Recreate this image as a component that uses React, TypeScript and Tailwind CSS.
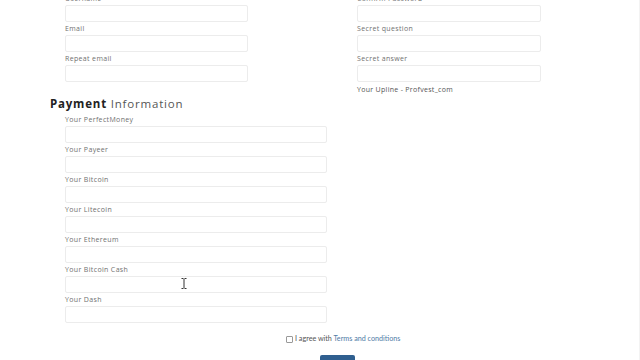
import React from "react";

const topLeft = ["Username", "Email", "Repeat email"];
const topRight = ["Confirm Password", "Secret question", "Secret answer"];
const payment = [
  "Your PerfectMoney",
  "Your Payeer",
  "Your Bitcoin",
  "Your Litecoin",
  "Your Ethereum",
  "Your Bitcoin Cash",
  "Your Dash",
];

const Field = ({ label, width }: { label: string; width: string }) => (
  <div className="flex flex-col">
    <label className="h-[13px] text-[7px] leading-[13px] tracking-[0.35px] text-[#707070]">
      {label}
    </label>
    <div className={`${width} h-[17px] rounded-[2px] border border-[#ececec] bg-white`} />
  </div>
);

const App = () => {
  return (
    <div
      className="relative h-[360px] w-[640px] overflow-hidden border-r border-[#f3f3f3] bg-white"
      style={{ fontFamily: '"Open Sans", "Noto Sans", sans-serif' }}
    >
      <div className="-mt-[8px] flex flex-col pl-[50px]">
        <div className="flex items-start gap-[109px] pl-[15px]">
          <div className="flex w-[183px] flex-col">
            {topLeft.map((l) => (
              <Field key={l} label={l} width="w-[183px]" />
            ))}
          </div>
          <div className="flex w-[184px] flex-col">
            {topRight.map((l) => (
              <Field key={l} label={l} width="w-[184px]" />
            ))}
            <p className="mt-[3px] text-[7px] leading-[10px] tracking-[0.3px] text-[#555]">
              Your Upline - Profvest_com
            </p>
          </div>
        </div>

        <h2 className="mt-0 text-[11.5px] leading-[18px] tracking-[0.8px] text-[#555]">
          <span className="font-bold text-[#222]">Payment</span> Information
        </h2>

        <div className="flex flex-col pl-[15px]">
          {payment.map((l) => (
            <Field key={l} label={l} width="w-[262px]" />
          ))}
        </div>

        <div
          className="mt-[11px] flex items-center gap-[2px] pl-[236px] text-[7.2px] leading-[10px] text-[#555]"
          style={{ fontFamily: "Lato, sans-serif" }}
        >
          <span className="h-[7px] w-[7px] rounded-[1px] border border-[#999] bg-white" />
          <span>
            I agree with <span className="text-[#4f7ba6]">Terms and conditions</span>
          </span>
        </div>

        <div className="mt-[11px] ml-[270px] h-[12px] w-[35px] rounded-t-[2px] bg-[#2f5f8f]" />
      </div>

      <svg
        className="absolute left-[181px] top-[278px]"
        width="6"
        height="11"
        viewBox="0 0 6 11"
        fill="none"
        stroke="#333"
        strokeWidth="1"
      >
        <path d="M0.5 0.5h2M3.5 0.5h2M3 1v9M0.5 10.5h2M3.5 10.5h2" />
      </svg>
    </div>
  );
};

export default App;
